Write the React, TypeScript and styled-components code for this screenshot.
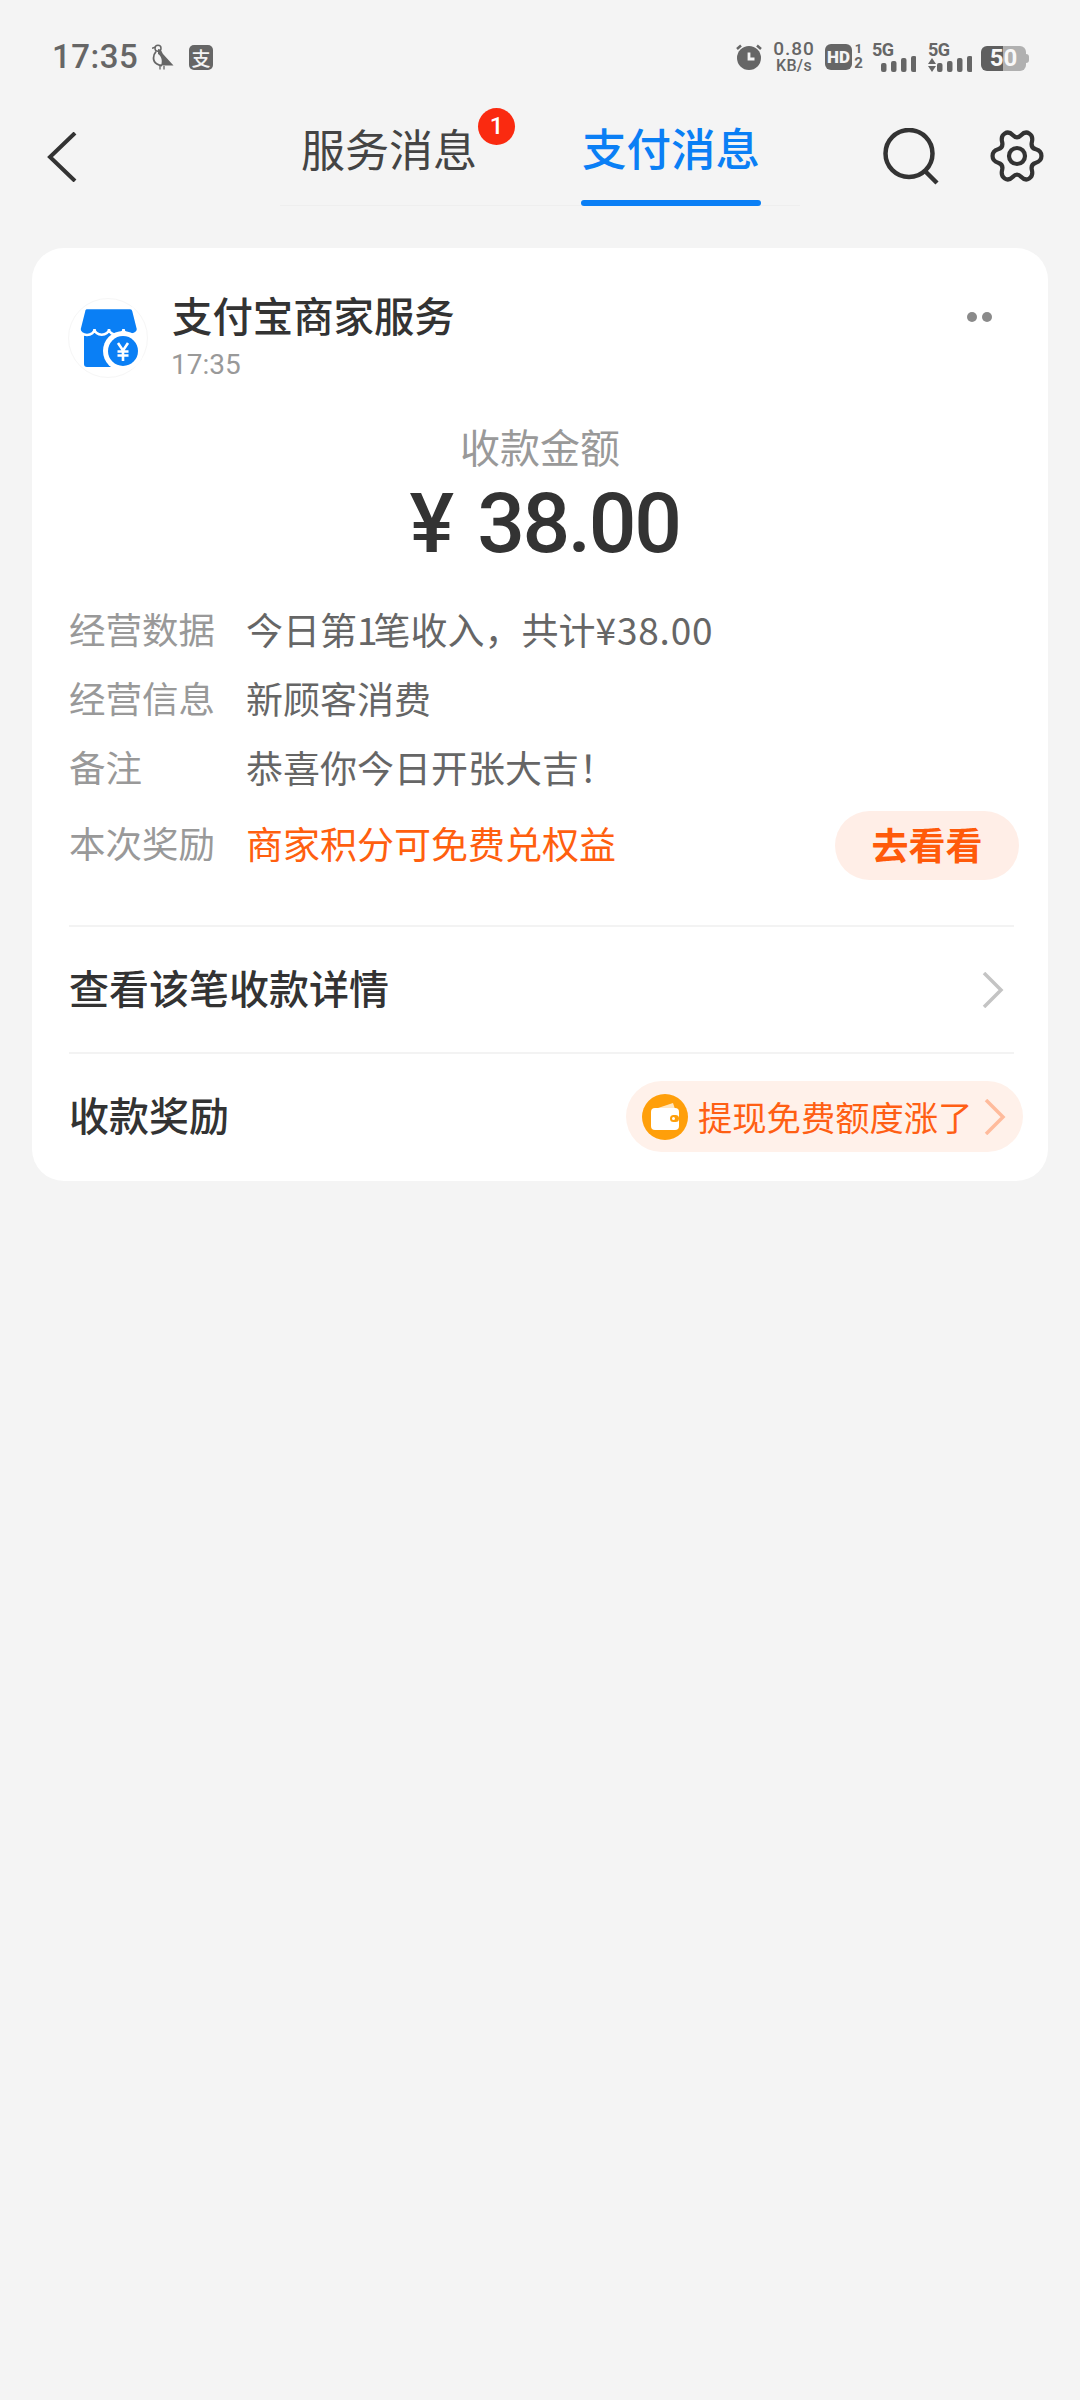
import React from 'react';
import styled, { createGlobalStyle } from 'styled-components';

const GlobalStyle = createGlobalStyle`
  html, body {
    margin: 0;
    padding: 0;
    background: #f4f4f4;
  }
  * {
    box-sizing: border-box;
  }
  body {
    font-family: 'Noto Sans CJK SC', 'Noto Sans', sans-serif;
  }
`;

const Page = styled.div`
  width: 1080px;
  height: 2400px;
  background: #f4f4f4;
  overflow: hidden;
`;

const StatusBar = styled.div`
  height: 112px;
  padding: 42px 52px 0 52px;
  display: flex;
  align-items: flex-start;
  color: #666;
`;

const Clock = styled.span`
  font-family: Roboto, sans-serif;
  font-size: 33px;
  font-weight: 500;
  line-height: 30px;
  letter-spacing: 0.5px;
  width: 100px;
`;

const LeftIcons = styled.div`
  display: flex;
  align-items: center;
  gap: 15px;
  height: 30px;
`;

const AppTile = styled.span`
  width: 24px;
  height: 25px;
  border-radius: 5px;
  background: #666;
  color: #f4f4f4;
  font-size: 19px;
  font-weight: 500;
  line-height: 25px;
  text-align: center;
`;

const RightIcons = styled.div`
  margin-left: auto;
  display: flex;
  align-items: center;
  height: 30px;
  gap: 9px;
  svg {
    display: block;
  }
`;

const Speed = styled.div`
  width: 44px;
  display: flex;
  flex-direction: column;
  align-items: center;
  font-family: Roboto, sans-serif;
  font-weight: 500;
  color: #666;
  b {
    font-size: 19px;
    font-weight: 500;
    line-height: 18px;
    letter-spacing: 1px;
  }
  span {
    font-size: 16px;
    line-height: 16px;
    letter-spacing: 0.3px;
  }
`;

const HdGroup = styled.div`
  width: 38px;
  display: flex;
  align-items: center;
  gap: 2px;
`;

const HdTile = styled.span`
  width: 27px;
  height: 26px;
  flex-shrink: 0;
  border-radius: 6px;
  background: #666;
  color: #f4f4f4;
  font-family: Roboto, sans-serif;
  font-size: 17px;
  font-weight: 900;
  line-height: 26px;
  text-align: center;
`;

const SimSlots = styled.div`
  display: flex;
  flex-direction: column;
  align-items: center;
  width: 9px;
  font-family: Roboto, sans-serif;
  font-weight: 700;
  color: #666;
  span {
    font-size: 15px;
    line-height: 17px;
  }
  span:first-child {
    font-size: 13px;
    line-height: 13px;
  }
`;

const Signal = styled.div<{ $arrows?: boolean }>`
  position: relative;
  width: ${(p) => (p.$arrows ? 47 : 44)}px;
  height: 30px;
  font-family: Roboto, sans-serif;
  color: #666;
  span {
    position: absolute;
    left: ${(p) => (p.$arrows ? 3 : 0)}px;
    top: -1px;
    font-size: 18px;
    font-weight: 700;
    line-height: 18px;
    letter-spacing: -0.5px;
  }
`;

const Battery = styled.div`
  position: relative;
  margin: 2px 2px 0 0;
  width: 45px;
  height: 25px;
  display: flex;
  align-items: center;
  justify-content: center;
  border-radius: 6px;
  background: linear-gradient(90deg, #5f5f5f 0 49%, #b0b0b0 49% 100%);
  color: #f8f8f8;
  font-family: Roboto, sans-serif;
  font-size: 24px;
  font-weight: 700;
  &::after {
    content: '';
    position: absolute;
    right: -3px;
    top: 8px;
    width: 3px;
    height: 9px;
    border-radius: 0 3px 3px 0;
    background: #b0b0b0;
  }
`;

const NavBar = styled.div`
  height: 94px;
  display: flex;
  align-items: flex-start;
`;

const BackButton = styled.div`
  width: 280px;
  padding: 20px 0 0 46px;
  svg {
    display: block;
  }
`;

const Tabs = styled.div`
  width: 520px;
  height: 94px;
  padding-left: 19px;
  display: flex;
  gap: 102px;
  border-bottom: 1px solid #eeeeee;
`;

const Tab = styled.div<{ $active?: boolean }>`
  position: relative;
  width: 180px;
  height: 94px;
  text-align: center;
  padding-top: ${(p) => (p.$active ? 0 : 2)}px;
  font-size: ${(p) => (p.$active ? 44.5 : 44)}px;
  line-height: 69px;
  font-weight: ${(p) => (p.$active ? 500 : 400)};
  color: ${(p) => (p.$active ? '#0a7ff5' : '#444')};
  ${(p) =>
    p.$active &&
    `&::after {
      content: '';
      position: absolute;
      left: 0;
      right: 0;
      bottom: 0;
      height: 6px;
      border-radius: 3px;
      background: #0a7ff5;
    }`}
`;

const Badge = styled.span`
  position: absolute;
  left: 179px;
  top: -4px;
  width: 37px;
  height: 37px;
  border-radius: 50%;
  background: #fa2a10;
  color: #fff;
  font-family: Roboto, sans-serif;
  font-size: 24px;
  font-weight: 500;
  line-height: 37px;
  text-align: center;
`;

const NavActions = styled.div`
  margin-left: auto;
  padding: 16px 36px 0 0;
  display: flex;
  align-items: flex-start;
  gap: 51px;
  svg {
    display: block;
  }
`;

const Card = styled.section`
  margin: 42px 32px 0 32px;
  height: 933px;
  border-radius: 32px;
  background: #fff;
  padding: 50px 34px 0 37px;
`;

const SenderRow = styled.header`
  display: flex;
  align-items: flex-start;
  height: 80px;
`;

const SenderLogo = styled.div`
  width: 80px;
  height: 80px;
  margin-left: -1px;
  flex-shrink: 0;
  border-radius: 50%;
  border: 1px solid #f6f6f6;
  svg {
    display: block;
  }
`;

const SenderText = styled.div`
  margin-left: 24px;
  display: flex;
  flex-direction: column;
`;

const SenderName = styled.h2`
  margin: -11px 0 0 0;
  font-size: 40.4px;
  font-weight: 500;
  line-height: 56px;
  color: #333;
`;

const SenderTime = styled.span`
  margin: 4px 0 0 -1px;
  font-family: Roboto, sans-serif;
  font-size: 28px;
  line-height: 36px;
  color: #999;
`;

const MoreDots = styled.div`
  margin: 14px 22px 0 auto;
  display: flex;
  gap: 5px;
  i {
    width: 10px;
    height: 10px;
    border-radius: 50%;
    background: #8a8a8a;
  }
`;

const AmountBlock = styled.div`
  margin-top: 40px;
  margin-left: -3px;
  display: flex;
  flex-direction: column;
  align-items: center;
`;

const AmountLabel = styled.div`
  font-size: 40px;
  line-height: 56px;
  color: #999;
`;

const AmountValue = styled.div`
  height: 90px;
  margin-top: 5px;
  padding-left: 9px;
  font-family: Roboto, sans-serif;
  font-size: 84px;
  font-weight: 500;
  line-height: 90px;
  color: #333;
  letter-spacing: -2.4px;
  word-spacing: 7px;
`;

const Details = styled.div`
  margin-top: 28px;
`;

const DetailRow = styled.div<{ $tall?: boolean }>`
  display: flex;
  align-items: center;
  height: 69px;
  margin-top: ${(p) => (p.$tall ? 7 : 0)}px;
`;

const DetailLabel = styled.span`
  width: 177px;
  flex-shrink: 0;
  padding-bottom: 6px;
  font-size: 36.5px;
  color: #999;
`;

const DetailValue = styled.span<{ $accent?: boolean }>`
  padding-bottom: 6px;
  font-size: 37px;
  color: ${(p) => (p.$accent ? '#ff5f0f' : '#666')};
`;

// digits in the running text set tighter or looser than the CJK around them
const InlineFigure = styled.span<{ $spacing: number }>`
  letter-spacing: ${(p) => p.$spacing}px;
`;

const LookButton = styled.div`
  margin-left: auto;
  margin-right: -5px;
  width: 184px;
  height: 69px;
  border-radius: 35px;
  background: #ffeee7;
  color: #ff5a0a;
  font-size: 37px;
  font-weight: 700;
  line-height: 66px;
  text-align: center;
`;

const LinkRow = styled.div<{ $first?: boolean }>`
  display: flex;
  align-items: center;
  height: 127px;
  border-top: 2px solid #f3f3f3;
  margin-top: ${(p) => (p.$first ? 45 : 0)}px;
`;

const LinkTitle = styled.span`
  padding-bottom: 6px;
  font-size: 40px;
  font-weight: 500;
  color: #333;
`;

const Chevron = styled.svg`
  margin-left: auto;
  margin-right: 10px;
  display: block;
`;

const RewardPill = styled.div`
  margin-left: auto;
  margin-right: -9px;
  width: 397px;
  height: 71px;
  padding-left: 16px;
  border-radius: 36px;
  background: #fff1ea;
  display: flex;
  align-items: center;
  color: #ff5f14;
  svg {
    display: block;
    flex-shrink: 0;
  }
`;

const RewardText = styled.span`
  margin-left: 10px;
  width: 286px;
  padding-bottom: 2px;
  font-size: 34.3px;
  white-space: nowrap;
`;

function SignalBars({ x }: { x: number }) {
  const heights = [9, 11, 14, 16];
  return (
    <>
      {heights.map((h, i) => (
        <rect key={i} x={x + i * 10} y={30 - h} width={5.5} height={h} rx={2} fill="#666" />
      ))}
    </>
  );
}

function BirdIcon() {
  return (
    <svg width="22" height="26" viewBox="0 0 22 26" fill="none">
      <circle cx="6" cy="4.200" r="3" stroke="#666" strokeWidth="1.500" />
      <path d="M3 3.200 0 4.200" stroke="#666" strokeWidth="1.500" />
      <path d="M6 5c3 0 4 3 5 5l10.500 11.500H9c2-5 0-10-3-11.500z" fill="#666" />
      <path d="M4 7.500C1 11 0 17 5 20c1.500 1 3 1.500 5 1.500" stroke="#666" strokeWidth="1.800" />
      <path d="M8 22v3.500M12 22v3.500" stroke="#666" strokeWidth="1.300" />
    </svg>
  );
}

function AlarmIcon() {
  return (
    <svg width="28" height="28" viewBox="0 0 28 28" fill="none">
      <circle cx="14" cy="15" r="12" fill="#666" />
      <path d="M2 6 6 2.500M26 6 22 2.500" stroke="#666" strokeWidth="2.500" />
      <path d="M14 9.500V16h5.500" stroke="#f4f4f4" strokeWidth="2.800" />
    </svg>
  );
}

function SearchIcon() {
  return (
    <svg width="56" height="58" viewBox="0 0 56 58" fill="none" stroke="#333" strokeWidth="4.500">
      <circle cx="26" cy="25.500" r="23.500" />
      <path d="M42 43 54 55" />
    </svg>
  );
}

// six wide teeth with round corners: midpoints of the outline joined by quadratic curves
function gearPath(cx: number, cy: number) {
  const pts: [number, number][] = [];
  for (let k = 0; k < 6; k++) {
    const polar = (deg: number, r: number): [number, number] => [
      cx + 0.94 * r * Math.cos((deg * Math.PI) / 180),
      cy + r * Math.sin((deg * Math.PI) / 180),
    ];
    pts.push(polar(k * 60 - 11, 26.5), polar(k * 60 + 11, 26.5), polar(k * 60 + 30, 16.5));
  }
  const mid = (a: [number, number], b: [number, number]) =>
    `${((a[0] + b[0]) / 2).toFixed(2)} ${((a[1] + b[1]) / 2).toFixed(2)}`;
  let d = `M${mid(pts[pts.length - 1], pts[0])}`;
  pts.forEach((p, i) => {
    d += `Q${p[0].toFixed(2)} ${p[1].toFixed(2)} ${mid(p, pts[(i + 1) % pts.length])}`;
  });
  return d + 'Z';
}

function GearIcon() {
  return (
    <svg width="54" height="56" viewBox="0 0 54 56" fill="none" stroke="#333" strokeWidth="4.200">
      <path d={gearPath(27, 28)} />
      <circle cx="27" cy="28" r="8" />
    </svg>
  );
}

function StoreLogo() {
  return (
    <svg width="78" height="78" viewBox="0 0 78 78">
      <path d="M15 30h45v38H18a3 3 0 0 1-3-3z" fill="#0a7ff5" />
      <path
        d="M17 9h44a3.500 3.500 0 0 1 3.500 3L69 30a7 5.500 0 0 1-14.500 0a7 5.500 0 0 1-14.500 0a7 5.500 0 0 1-14.500 0a7 5.500 0 0 1-15 0l4.500-18A3.500 3.500 0 0 1 17 9z"
        fill="#0a7ff5"
        stroke="#fff"
        strokeWidth="2.500"
      />
      <circle cx="54" cy="52" r="20" fill="#fff" />
      <circle cx="54" cy="52" r="15" fill="#0a7ff5" />
      <path d="M49 44l5 7.500 5-7.500M48.500 52.500h11M48.500 56.500h11M54 51.500V62" fill="none" stroke="#fff" strokeWidth="2.600" />
    </svg>
  );
}

function WalletCoin() {
  return (
    <svg width="46" height="46" viewBox="0 0 46 46">
      <circle cx="23" cy="23" r="23" fill="#ff9f0a" />
      <path d="M16 14 31 9l2 6z" fill="#ffe7c2" />
      <rect x="9" y="14" width="28" height="22" rx="4" fill="#fff" />
      <rect x="28" y="21" width="9" height="7" rx="3.500" fill="#ff9f0a" />
      <circle cx="31.500" cy="24.500" r="1.500" fill="#fff" />
    </svg>
  );
}

function ChevronRight({ color }: { color: string }) {
  return (
    <Chevron width="22" height="36" viewBox="0 0 22 36" fill="none" stroke={color} strokeWidth="3.500">
      <path d="M2 1 19 18 2 35" />
    </Chevron>
  );
}

export default function App() {
  return (
    <Page>
      <GlobalStyle />
      <StatusBar>
        <Clock>17:35</Clock>
        <LeftIcons>
          <BirdIcon />
          <AppTile>支</AppTile>
        </LeftIcons>
        <RightIcons>
          <AlarmIcon />
          <Speed>
            <b>0.80</b>
            <span>KB/s</span>
          </Speed>
          <HdGroup>
            <HdTile>HD</HdTile>
            <SimSlots>
              <span>1</span>
              <span>2</span>
            </SimSlots>
          </HdGroup>
          <Signal>
            <span>5G</span>
            <svg width="44" height="30" viewBox="0 0 44 30">
              <SignalBars x={9} />
            </svg>
          </Signal>
          <Signal $arrows>
            <span>5G</span>
            <svg width="47" height="30" viewBox="0 0 47 30">
              <path d="M3 22h8l-4-6zM3 24h8l-4 6z" fill="#666" />
              <SignalBars x={12} />
            </svg>
          </Signal>
          <Battery>50</Battery>
        </RightIcons>
      </StatusBar>

      <NavBar>
        <BackButton>
          <svg width="32" height="50" viewBox="0 0 32 50" fill="none" stroke="#333" strokeWidth="4">
            <path d="M29 1 4 25l25 24" />
          </svg>
        </BackButton>
        <Tabs>
          <Tab>
            服务消息
            <Badge>1</Badge>
          </Tab>
          <Tab $active>支付消息</Tab>
        </Tabs>
        <NavActions>
          <SearchIcon />
          <GearIcon />
        </NavActions>
      </NavBar>

      <Card>
        <SenderRow>
          <SenderLogo>
            <StoreLogo />
          </SenderLogo>
          <SenderText>
            <SenderName>支付宝商家服务</SenderName>
            <SenderTime>17:35</SenderTime>
          </SenderText>
          <MoreDots>
            <i />
            <i />
          </MoreDots>
        </SenderRow>

        <AmountBlock>
          <AmountLabel>收款金额</AmountLabel>
          <AmountValue>¥ 38.00</AmountValue>
        </AmountBlock>

        <div>
          <Details>
            <DetailRow>
              <DetailLabel>经营数据</DetailLabel>
              <DetailValue>
                今日第<InlineFigure $spacing={-4}>1</InlineFigure>笔收入，共计
                <InlineFigure $spacing={0.8}>¥38.00</InlineFigure>
              </DetailValue>
            </DetailRow>
            <DetailRow>
              <DetailLabel>经营信息</DetailLabel>
              <DetailValue>新顾客消费</DetailValue>
            </DetailRow>
            <DetailRow>
              <DetailLabel>备注</DetailLabel>
              <DetailValue>恭喜你今日开张大吉！</DetailValue>
            </DetailRow>
            <DetailRow $tall>
              <DetailLabel>本次奖励</DetailLabel>
              <DetailValue $accent>商家积分可免费兑权益</DetailValue>
              <LookButton>去看看</LookButton>
            </DetailRow>
          </Details>
        </div>

        <LinkRow $first>
          <LinkTitle>查看该笔收款详情</LinkTitle>
          <ChevronRight color="#c4c4c4" />
        </LinkRow>
        <LinkRow>
          <LinkTitle>收款奖励</LinkTitle>
          <RewardPill>
            <WalletCoin />
            <RewardText>提现免费额度涨了</RewardText>
            <svg width="22" height="36" viewBox="0 0 22 36" fill="none" stroke="#ffbb9c" strokeWidth="3.500">
              <path d="M2 1 19 18 2 35" />
            </svg>
          </RewardPill>
        </LinkRow>
      </Card>
    </Page>
  );
}
